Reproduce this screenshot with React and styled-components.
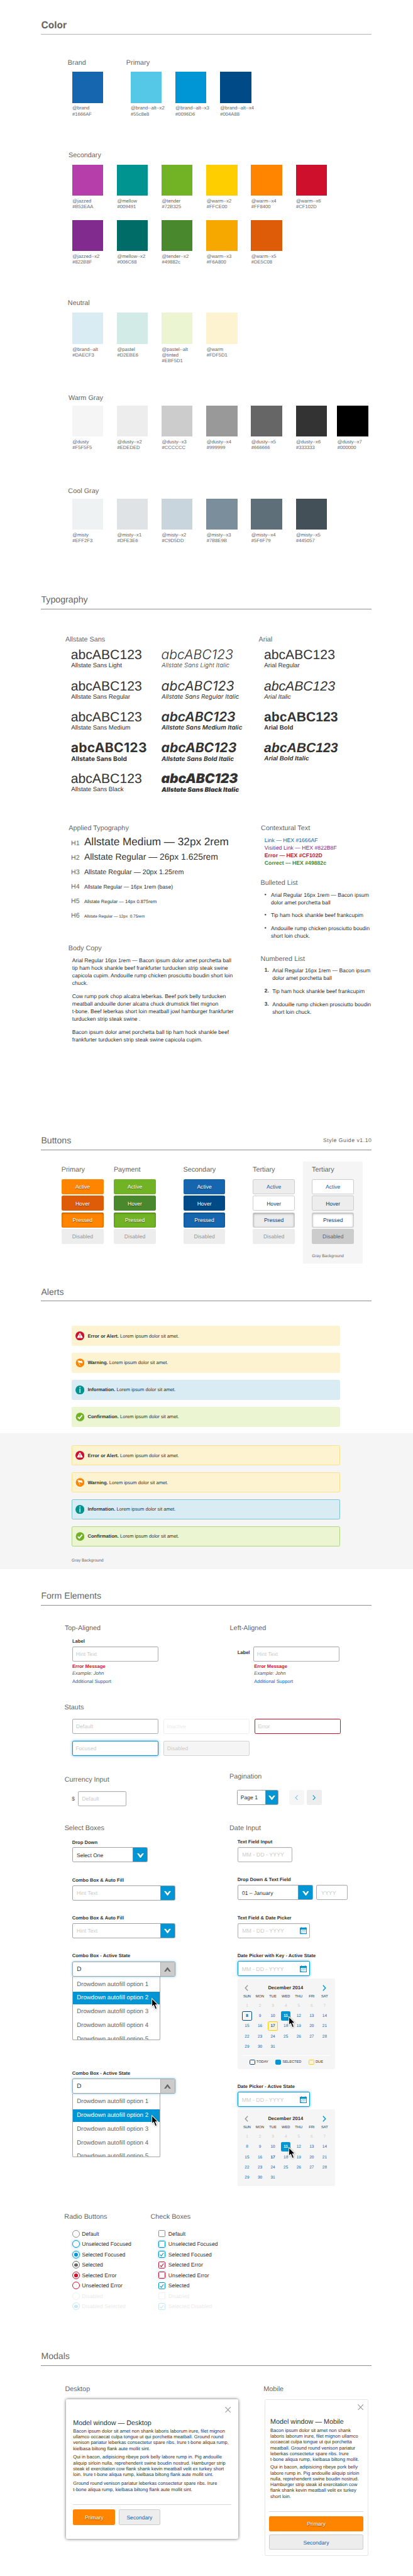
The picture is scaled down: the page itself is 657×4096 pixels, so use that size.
import React from "react";
import styled, { createGlobalStyle, css } from "styled-components";

/* One design unit is a tenth of a rem; the root size sets the scale of the sheet. */
const u = (n) => `${n / 10}rem`;

const GlobalStyle = createGlobalStyle`
  html { font-size: 5.473px; }
  body {
    margin: 0;
    background: #fff;
    color: #333;
    font-family: "Liberation Sans", Arial, Helvetica, sans-serif;
    font-size: ${u(15.8)};
    text-rendering: geometricPrecision;
  }
  *, *::before, *::after { box-sizing: border-box; }
  p, h1, h2, h3, ul, ol { margin: 0; padding: 0; font-weight: 400; list-style: none; }
`;

/* ---------- page frame ---------- */

const Page = styled.main`
  width: ${u(1200)};
  height: ${u(7484)};
  padding-top: ${u(58)};
  overflow: hidden;
`;

const Section = styled.section`
  height: ${(p) => u(p.$height)};
`;

const SectionHeader = styled.header`
  display: flex;
  justify-content: space-between;
  align-items: flex-end;
  width: ${u(960)};
  height: ${u(42)};
  margin-left: ${u(119.5)};
  padding-bottom: ${(p) => u(p.$pad ?? 10.5)};
  border-bottom: 1px solid ${(p) => p.$rule ?? "#8f8f8f"};
`;

const SectionTitle = styled.h1`
  font-size: ${(p) => u(p.$size ?? 25.8)};
  line-height: ${u(30)};
  color: #666;
  white-space: nowrap;
  ${(p) =>
    p.$strong &&
    css`
      font-family: Inter, "Open Sans", sans-serif;
      font-weight: 700;
    `}
`;

const Version = styled.span`
  font-size: ${u(15.8)};
  line-height: ${u(29)};
  letter-spacing: ${u(1)};
  margin-right: ${u(-1)};
  color: #666;
`;

const Label = styled.h2`
  margin-left: ${(p) => u(p.$x ?? 0)};
  font-size: ${u(19.8)};
  line-height: ${u(24)};
  color: #666;
  white-space: nowrap;
`;

const Split = styled.div`
  display: grid;
  grid-template-columns: ${(p) => p.$cols.map(u).join(" ")};
  align-items: start;
  margin-top: ${(p) => u(p.$top ?? 0)};
  margin-left: ${(p) => u(p.$x ?? 0)};
  height: ${(p) => (p.$height ? u(p.$height) : "auto")};
`;

const Column = styled.div`
  display: flex;
  flex-direction: column;
  padding-top: ${(p) => u(p.$top ?? 0)};
`;

/* ---------- colour ---------- */

const PaletteGroup = styled.div`
  height: ${(p) => u(p.$height)};
`;

const SwatchGrid = styled.div`
  display: grid;
  grid-template-columns: ${(p) => (p.$tail ? `repeat(6, ${u(130)}) ${u(90)}` : `repeat(7, ${u(130)})`)};
  grid-auto-rows: ${u(160)};
  margin-top: ${(p) => u(p.$gap)};
  margin-left: ${(p) => u(p.$x ?? 210)};
`;

const SwatchItem = styled.div`
  width: ${u(90)};
  margin-left: ${(p) => (p.$last ? u(-10) : 0)};
`;

const Chip = styled.div`
  height: ${u(90)};
  background: ${(p) => p.$color};
`;

const ChipText = styled.p`
  padding: ${u(7)} 0 0 ${(p) => u(p.$inset ?? 0)};
  font-size: ${u(14)};
  line-height: ${u(16.8)};
  color: #666;
  white-space: pre;
`;

function Swatches({ items, gap, x, tail, inset }) {
  return (
    <SwatchGrid $gap={gap} $x={x} $tail={tail}>
      {items.map(([color, name], i) => (
        <SwatchItem key={name} $last={tail && i === 6}>
          <Chip $color={color} />
          <ChipText $inset={inset}>{name}</ChipText>
        </SwatchItem>
      ))}
    </SwatchGrid>
  );
}

const primary = [
  ["#55c8e8", "@brand--alt--x2\n#55c8e8"],
  ["#0096d6", "@brand--alt--x3\n#0096D6"],
  ["#004a88", "@brand--alt--x4\n#004A88"],
];
const secondaryTop = [
  ["#b53eaa", "@jazzed\n#B53EAA"],
  ["#009491", "@mellow\n#009491"],
  ["#72b325", "@tender\n#72B325"],
  ["#ffce00", "@warm--x2\n#FFCE00"],
  ["#ff8400", "@warm--x4\n#FF8400"],
  ["#cf102d", "@warm--x6\n#CF102D"],
];
const secondaryBottom = [
  ["#822b8f", "@jazzed--x2\n#822B8F"],
  ["#006c68", "@mellow--x2\n#006C68"],
  ["#49882c", "@tender--x2\n#49882c"],
  ["#f6a800", "@warm--x3\n#F6A800"],
  ["#de5c08", "@warm--x5\n#DE5C08"],
];
const neutral = [
  ["#daecf3", "@brand--alt\n#DAECF3"],
  ["#d2ebe6", "@pastel\n#D2EBE6"],
  ["#ebf5d1", "@pastel--alt\n@tinted\n#EBF5D1"],
  ["#fdf3d1", "@warm\n#FDF5D1"],
];
const warmGray = [
  ["#f5f5f5", "@dusty\n#F5F5F5"],
  ["#ededed", "@dusty--x2\n#EDEDED"],
  ["#cccccc", "@dusty--x3\n#CCCCCC"],
  ["#999999", "@dusty--x4\n#999999"],
  ["#666666", "@dusty--x5\n#666666"],
  ["#333333", "@dusty--x6\n#333333"],
  ["#000000", "@dusty--x7\n#000000"],
];
const coolGray = [
  ["#eff2f3", "@misty\n#EFF2F3"],
  ["#dfe3e6", "@misty--x1\n#DFE3E6"],
  ["#c9d5dd", "@misty--x2\n#C9D5DD"],
  ["#7b8e9b", "@misty--x3\n#7B8E9B"],
  ["#5f6f79", "@misty--x4\n#5F6F79"],
  ["#445057", "@misty--x5\n#445057"],
];

/* ---------- typography ---------- */

const SpecimenGrid = styled.div`
  display: grid;
  grid-template-columns: ${u(262.8)} ${u(298.5)} ${u(260)};
  grid-auto-rows: ${u(90)};
  margin: ${u(12.5)} 0 0 ${u(206)};
`;

const Specimen = styled.div`
  font-family: ${(p) => (p.$face === "inter" ? "Inter, sans-serif" : "inherit")};
  font-weight: ${(p) => p.$weight};
  font-style: ${(p) => (p.$italic ? "italic" : "normal")};
  color: #333;
  white-space: nowrap;
`;

const SpecimenSample = styled.div`
  font-size: ${(p) => u(p.$size ?? 38.7)};
  line-height: ${u(40)};
  letter-spacing: ${(p) => u(p.$track ?? 0)};
`;

const SpecimenName = styled.div`
  padding-left: ${u(0.8)};
  font-size: ${(p) => u(p.$size ?? 17.85)};
  line-height: ${u(22)};
`;

const specimens = [
  { name: "Allstate Sans Light", weight: 400 },
  { name: "Allstate Sans Light Italic", weight: 300, italic: true, face: "inter", track: 0.1 },
  { name: "Arial Regular", weight: 400 },
  { name: "Allstate Sans Regular", weight: 400 },
  { name: "Allstate Sans Regular Italic", weight: 400, italic: true, face: "inter", track: 0.1 },
  { name: "Arial Italic", weight: 400, italic: true },
  { name: "Allstate Sans Medium", weight: 400 },
  { name: "Allstate Sans Medium Italic", weight: 600, italic: true, face: "inter", track: -0.1 },
  { name: "Arial Bold", weight: 700 },
  { name: "Allstate Sans Bold", weight: 700, face: "inter", track: 0.5, nameSize: 18.4 },
  { name: "Allstate Sans Bold Italic", weight: 700, italic: true, face: "inter", nameSize: 18.2 },
  { name: "Arial Bold Italic", weight: 700, italic: true },
  { name: "Allstate Sans Black", weight: 400 },
  { name: "Allstate Sans Black Italic", weight: 900, italic: true, face: "inter", track: -0.35, nameSize: 18 },
];

const HeadingRow = styled.div`
  display: flex;
  align-items: baseline;
  height: ${u(42)};
  margin-left: ${u(7)};
  white-space: nowrap;
`;

const HeadingTag = styled.span`
  width: ${u(38)};
  font-size: ${u(19.4)};
  line-height: ${u(42)};
  color: #666;
`;

const HeadingSample = styled.span`
  font-size: ${(p) => u(p.$size)};
  line-height: 1;
  color: #333;
  white-space: pre;
`;

const headings = [
  ["H1", 31.4, "Allstate Medium — 32px 2rem"],
  ["H2", 25.5, "Allstate Regular — 26px 1.625rem"],
  ["H3", 19.7, "Allstate Regular — 20px 1.25rem"],
  ["H4", 15.7, "Allstate Regular — 16px 1rem (base)"],
  ["H5", 13.8, "Allstate Regular — 14px 0.875rem"],
  ["H6", 11.75, "Allstate Regular — 12px  0.75rem"],
];

const Copy = styled.p`
  font-size: ${(p) => u(p.$size ?? 15.75)};
  line-height: ${(p) => u(p.$line ?? 22)};
  color: #333;
  white-space: pre;
`;

const BodyCopy = styled.div`
  display: flex;
  flex-direction: column;
  gap: ${u(16)};
  margin: ${u(9.7)} 0 0 ${u(10)};
`;

const ContextList = styled.div`
  margin: ${u(10)} 0 0 ${u(10.5)};
`;

const ContextLine = styled.p`
  font-size: ${u(15.85)};
  line-height: ${u(22)};
  font-weight: ${(p) => (p.$bold ? 700 : 400)};
  color: ${(p) => p.$color};
`;

const ItemList = styled.ul`
  display: flex;
  flex-direction: column;
  gap: ${u(16)};
  margin: ${u(9.8)} 0 0 ${u(10.5)};
`;

const Item = styled.li`
  display: grid;
  grid-template-columns: ${(p) => u(p.$indent)} auto;
`;

const Marker = styled.span`
  font-weight: 700;
  font-size: ${u(15)};
  line-height: ${u(22)};
`;

const Spacer = styled.div`
  height: ${(p) => u(p.$h)};
`;

/* ---------- buttons ---------- */

const looks = {
  orange: ["#ff8400", "#fff"],
  orangeHover: ["#de5c08", "#fff"],
  green: ["#72b325", "#fff"],
  greenHover: ["#49882c", "#fff"],
  blue: ["#1666af", "#fff"],
  blueHover: ["#004a88", "#fff"],
  light: ["#ededed", "#1666af", "#ccc"],
  lightHover: ["#ededed", "#004a88", "#ccc"],
  white: ["#fff", "#1666af", "#ccc"],
  whiteHover: ["#fff", "#004a88", "#ccc"],
  disabled: ["#ededed", "#999"],
  disabledDark: ["#ccc", "#666"],
};

const Button = styled.div`
  display: flex;
  align-items: center;
  justify-content: center;
  width: ${(p) => (p.$wide ? "100%" : u(122))};
  height: ${u(44)};
  padding-top: ${u(1.5)};
  border: ${(p) => (looks[p.$look][2] ? `1px solid ${looks[p.$look][2]}` : "0")};
  border-radius: ${u(4)};
  background: ${(p) => looks[p.$look][0]};
  color: ${(p) => looks[p.$look][1]};
  font-size: ${u(15.7)};
  text-shadow: ${(p) => (looks[p.$look][1] === "#fff" ? "0 0.1rem 0.2rem rgba(0,0,0,.5)" : "none")};
  box-shadow: ${(p) => (p.$pressed ? "inset 0 0.2rem 0.6rem rgba(0,0,0,.35)" : "none")};
`;

const ButtonBoard = styled.div`
  display: flex;
  margin: ${u(33)} 0 0 ${u(179)};
`;

const ButtonColumn = styled.div`
  width: ${(p) => u(p.$width)};
  height: ${u(297)};
  padding: ${u(12.8)} 0 0 ${(p) => u(p.$inset ?? 0)};
  background: ${(p) => (p.$shaded ? "#f5f5f5" : "transparent")};
`;

const ButtonStack = styled.div`
  display: flex;
  flex-direction: column;
  gap: ${u(4)};
  margin-top: ${u(15.2)};
`;

const Note = styled.p`
  margin: ${(p) => u(p.$top)} 0 0 ${(p) => u(p.$x ?? 0)};
  font-size: ${u(11.9)};
  line-height: ${u(16)};
  color: #666;
`;

function ButtonSet({ title, width, variants, inset, shaded, note }) {
  return (
    <ButtonColumn $width={width} $inset={inset} $shaded={shaded}>
      <Label $x={-0.5}>{title}</Label>
      <ButtonStack>
        <Button $look={variants[0]}>Active</Button>
        <Button $look={variants[1]}>Hover</Button>
        <Button $look={variants[2]} $pressed>Pressed</Button>
        <Button $look={variants[3]}>Disabled</Button>
      </ButtonStack>
      {note && <Note $top={29.5}>{note}</Note>}
    </ButtonColumn>
  );
}

/* ---------- alerts ---------- */

const AlertList = styled.div`
  display: flex;
  flex-direction: column;
  gap: ${u(20.3)};
  width: ${u(779)};
  margin-left: ${u(209)};
`;

const AlertBox = styled.div`
  display: flex;
  align-items: center;
  gap: ${u(9.5)};
  height: ${u(58)};
  padding-left: ${u(10.4)};
  border: 1px solid ${(p) => p.$edge};
  border-radius: ${u(4)};
  background: ${(p) => p.$fill};
  font-size: ${u(13.9)};
  color: #333;
`;

const AlertIcon = styled.svg`
  display: block;
  width: ${u(26)};
  height: ${u(26)};
  margin-left: -1px;
`;

const GrayBand = styled.div`
  height: ${u(395)};
  margin-top: ${u(18.5)};
  padding-top: ${u(36)};
  background: #f5f5f5;
`;

const alertKinds = [
  {
    title: "Error or Alert.", fill: "#fdf3d1", edge: "#fbe38c",
    icon: (
      <>
        <circle cx="13" cy="13" r="13" fill="#cf102d" />
        <path d="M13 6.2 L19.6 17.6 H6.4 Z" fill="#fff" stroke="#fff" strokeWidth="3" strokeLinejoin="round" />
        <path d="M12 8.6 h2.2 l-.4 5.6 h-1.4 z M12 15.4 h2.2 v2 h-2.2 z" fill="#cf102d" />
      </>
    ),
  },
  {
    title: "Warning.", fill: "#fdf3d1", edge: "#fbe38c",
    icon: (
      <>
        <circle cx="13.5" cy="13" r="12.5" fill="#ff8400" />
        <path d="M6.6 6.6 L13.2 20.2" stroke="#fff" strokeWidth="1.5" strokeLinecap="round" />
        <path d="M7.4 6.6 C10.5 3.8 12.6 9.2 18 6.6 L21.3 12.6 C17 15.6 14.4 10.8 10.6 13.8 Z" fill="#fff" />
      </>
    ),
  },
  {
    title: "Information.", fill: "#daecf3", edge: "#7cc6cf",
    icon: (
      <>
        <circle cx="13" cy="13" r="13" fill="#009491" />
        <circle cx="13.2" cy="6" r="1.9" fill="#daecf3" />
        <path d="M11.7 9.6 h3 v12 h-3 z" fill="#daecf3" />
      </>
    ),
  },
  {
    title: "Confirmation.", fill: "#ebf5d1", edge: "#afd681",
    icon: (
      <>
        <circle cx="13.5" cy="13" r="12.5" fill="#72b325" />
        <path d="M7.2 13.6 L11.4 17.6 L19.4 8" fill="none" stroke="#fff" strokeWidth="3.4" />
      </>
    ),
  },
];

function Alerts({ outlined }) {
  return (
    <AlertList>
      {alertKinds.map((a) => (
        <AlertBox key={a.title} $fill={a.fill} $edge={outlined ? a.edge : a.fill}>
          <AlertIcon viewBox="0 0 26 26">{a.icon}</AlertIcon>
          <span><b>{a.title}</b> Lorem ipsum dolor sit amet.</span>
        </AlertBox>
      ))}
    </AlertList>
  );
}

/* ---------- form elements ---------- */

const fieldStates = {
  normal: css`border: 1px solid #adadad; box-shadow: inset 0 0.1rem 0.2rem rgba(0,0,0,.12);`,
  inactive: css`border: 1px solid #efefef; color: #ececec;`,
  error: css`border: ${u(2)} solid #cf102d;`,
  focused: css`border: ${u(2)} solid #0096d6; box-shadow: 0 0 0.8rem rgba(0,150,214,.6);`,
  disabled: css`border: 1px solid #d4d4d4; background: #f5f5f5;`,
};

const Field = styled.div`
  display: flex;
  align-items: center;
  justify-content: space-between;
  flex: none;
  width: ${(p) => u(p.$width)};
  height: ${u(44)};
  padding: ${u(1)} ${u(6)} 0 ${(p) => u(p.$pad ?? 9)};
  border-radius: ${u(4)};
  background: #fff;
  color: #ccc;
  font-size: ${(p) => u(p.$date ? 16.2 : 15.7)};
  white-space: nowrap;
  ${(p) => fieldStates[p.$state ?? "normal"]}
`;

const FieldLabel = styled.div`
  font-size: ${u(13.9)};
  font-weight: 700;
  line-height: ${u(18)};
  color: #333;
  white-space: nowrap;
  padding-bottom: ${(p) => u(p.$gap ?? 5.5)};
`;

const FieldNote = styled.div`
  font-size: ${u(13.9)};
  line-height: ${u(20)};
  margin-left: ${(p) => u(p.$x ?? 0)};
  margin-top: ${(p) => u(p.$top ?? 0)};
  color: ${(p) => p.$color};
  font-weight: ${(p) => (p.$bold ? 700 : 400)};
  font-style: ${(p) => (p.$italic ? "italic" : "normal")};
`;

const FieldBlock = styled.div`
  height: ${(p) => u(p.$height ?? 110.2)};
`;

const Inline = styled.div`
  display: flex;
  align-items: center;
  margin-top: ${(p) => u(p.$top ?? 0)};
  margin-left: ${(p) => u(p.$x ?? 0)};
  gap: ${(p) => u(p.$gap ?? 0)};
`;

const StatusGrid = styled.div`
  display: grid;
  grid-template-columns: repeat(3, ${u(250)});
  gap: ${u(21)} ${u(15)};
  margin: ${u(19)} 0 0 ${u(210)};
`;

const Dollar = styled.span`
  width: ${u(18.5)};
  font-size: ${u(15.8)};
  color: #555;
`;

const SelectBox = styled.div`
  display: flex;
  flex: none;
  width: ${(p) => u(p.$width)};
  height: ${u(44)};
  border: 1px solid #a2a2a2;
  border-radius: ${u(4)};
  background: #fff;
  overflow: hidden;
  box-shadow: ${(p) => (p.$active ? "0 0 0.7rem rgba(0,150,214,.55)" : "none")};
`;

const SelectValue = styled.div`
  display: flex;
  align-items: center;
  flex: 1;
  padding: ${u(1)} 0 0 ${(p) => u(p.$pad ?? 11.5)};
  font-size: ${(p) => u(p.$size ?? 15.7)};
  color: ${(p) => (p.$hint ? "#ccc" : "#333")};
  white-space: nowrap;
`;

const SelectHandle = styled.div`
  display: flex;
  align-items: center;
  justify-content: center;
  width: ${(p) => u(p.$width ?? 42)};
  padding-top: ${u(3)};
  border-left: 1px solid ${(p) => (p.$open ? "#b0b0b0" : "#4f9fc4")};
  background: ${(p) => (p.$open ? "#ccc" : "#0096d6")};
  color: ${(p) => (p.$open ? "#666" : "#fff")};
  svg { width: ${u(20)}; height: ${u(13)}; transform: ${(p) => (p.$open ? "rotate(180deg)" : "none")}; }
`;

function Select({ width, value, hint, open, handle, pad, size }) {
  return (
    <SelectBox $width={width} $active={open}>
      <SelectValue $hint={hint} $pad={pad} $size={size}>{value}</SelectValue>
      <SelectHandle $open={open} $width={handle}>
        <svg viewBox="0 0 20 13"><path d="M0 0 H5.2 L10 6.6 L14.8 0 H20 L10.9 12.6 H9.1 Z" fill="currentColor" /></svg>
      </SelectHandle>
    </SelectBox>
  );
}

const PagerButton = styled.div`
  display: flex;
  align-items: center;
  justify-content: center;
  width: ${u(44)};
  height: ${u(44)};
  border-radius: ${u(4)};
  background: ${(p) => (p.$off ? "#f6f6f6" : "#ededed")};
  svg { width: ${u(10)}; height: ${u(16)}; opacity: ${(p) => (p.$off ? 0.5 : 1)}; }
`;

function Arrow({ left, color, width = 2 }) {
  return (
    <svg viewBox="0 0 10 16">
      <path d={left ? "M8.6 1 L2 8 L8.6 15" : "M1.4 1 L8 8 L1.4 15"} fill="none" stroke={color} strokeWidth={width} />
    </svg>
  );
}

/* Pointer sits over the open list or calendar. */
const Pointer = styled.svg`
  position: absolute;
  left: ${(p) => u(p.$x)};
  top: ${(p) => u(p.$y)};
  width: ${u(22)};
  height: ${u(36)};
  overflow: visible;
  filter: drop-shadow(0 0.1rem 0.2rem rgba(0, 0, 0, 0.4));
`;

function Cursor({ x, y }) {
  return (
    <Pointer viewBox="0 0 22 36" $x={x} $y={y}>
      <path d="M1 1 V26 L6.4 21 L11 32.5 L16 30.5 L11.6 19.6 H19 Z" fill="#000" stroke="#fff" strokeWidth="2" />
    </Pointer>
  );
}

const Overlay = styled.div`
  position: relative;
  width: ${(p) => u(p.$width)};
`;

const OptionList = styled.div`
  display: flex;
  flex-direction: column;
  gap: ${u(4)};
  width: ${u(257)};
  height: ${u(184)};
  padding-top: ${u(5)};
  border: 1px solid #a8a8a8;
  border-top: 0;
  border-radius: 0 0 ${u(4)} ${u(4)};
  overflow: hidden;
`;

const Option = styled.div`
  flex: none;
  height: ${u(36)};
  padding-left: ${u(12)};
  font-size: ${u(17.75)};
  line-height: ${u(36)};
  white-space: nowrap;
  color: ${(p) => (p.$on ? "#fff" : "#666")};
  background: ${(p) => (p.$on ? "#0096d6" : "transparent")};
`;

function Combo() {
  return (
    <Overlay $width={300}>
      <Select width={300} value="D" open pad={12} size={18} />
      <OptionList>
        {[1, 2, 3, 4, 5].map((n) => (
          <Option key={n} $on={n === 2}>{`Drowdown autofill option ${n}`}</Option>
        ))}
      </OptionList>
      <Cursor x={230.5} y={105.5} />
    </Overlay>
  );
}

const CalendarGlyph = styled.svg`
  width: ${u(21)};
  height: ${u(21)};
`;

function CalendarIcon() {
  const dots = [];
  for (let row = 0; row < 4; row++)
    for (let col = 0; col < 5; col++) {
      if ((row === 0 && col === 0) || (row === 3 && col > 1)) continue;
      dots.push(<rect key={`${row}${col}`} x={4 + col * 2.8} y={9 + row * 2.5} width="1.3" height="1.3" fill="#0096d6" />);
    }
  return (
    <CalendarGlyph viewBox="0 0 21 21">
      <path d="M1.5 2 H4 V0.8 Q5 -0.4 6 0.8 V2 H15 V0.8 Q16 -0.4 17 0.8 V2 H19.5 Q21 2 21 3.5 V19 Q21 20.6 19.5 20.6 H1.5 Q0 20.6 0 19 V3.5 Q0 2 1.5 2 Z" fill="#0096d6" />
      <rect x="2.6" y="7.8" width="15.8" height="10.6" rx=".8" fill="#fff" />
      {dots}
    </CalendarGlyph>
  );
}

const CalendarPanel = styled.div`
  width: ${u(283)};
  height: ${(p) => u(p.$height)};
  margin-top: ${u(6)};
  padding-top: ${u(18)};
  border-radius: ${u(4)};
  background: #f5f5f5;
`;

const CalendarHead = styled.div`
  display: flex;
  align-items: center;
  justify-content: space-between;
  height: ${u(19)};
  padding: 0 ${u(24)} 0 ${u(21)};
  font-size: ${u(13.9)};
  font-weight: 700;
  svg { width: ${u(11)}; height: ${u(18)}; }
`;

const DayGrid = styled.div`
  display: grid;
  grid-template-columns: repeat(7, ${u(37.6)});
  grid-template-rows: ${u(14)};
  grid-auto-rows: ${u(28)};
  row-gap: ${u(2)};
  justify-items: center;
  margin: ${u(12)} 0 0 ${u(9.2)};
`;

const Weekday = styled.span`
  font-size: ${u(10.5)};
  line-height: ${u(14)};
  color: #333;
`;

const dayLooks = {
  past: css`color: #ccc;`,
  plain: css`color: #1666af;`,
  bold: css`color: #1666af; font-weight: 700;`,
  today: css`color: #004a88; font-weight: 700; border: ${u(2)} solid #004a88;`,
  selected: css`color: #fff; font-weight: 700; background: #0096d6;`,
  due: css`color: #1666af; font-weight: 700; border: ${u(2)} solid #ffce00; background: #fdf3d1;`,
};

const Day = styled.span`
  display: flex;
  align-items: center;
  justify-content: center;
  width: ${u(28)};
  height: ${u(28)};
  padding-top: ${u(1.4)};
  border-radius: ${u(4)};
  font-size: ${u(11.8)};
  ${(p) => dayLooks[p.$look]}
`;

const Legend = styled.div`
  display: flex;
  gap: ${u(21)};
  margin: ${u(11)} ${u(13)} 0 ${u(14)};
  padding: ${u(10)} 0 0 ${u(21)};
  border-top: 1px solid #fff;
`;

const LegendItem = styled.div`
  display: flex;
  align-items: center;
  gap: ${u(4.2)};
  font-size: ${u(10.4)};
  color: #333;
`;

const LegendKey = styled.span`
  width: ${u(16)};
  height: ${u(16)};
  border: ${u(2)} solid ${(p) => p.$edge};
  border-radius: ${u(3)};
  background: ${(p) => p.$fill};
`;

function Calendar({ legend }) {
  const look = (d) => {
    if (d < 8) return "past";
    if (d === 11) return "selected";
    if (d === 8) return legend ? "today" : "plain";
    if (d === 17) return legend ? "due" : "bold";
    return "plain";
  };
  return (
    <Overlay $width={283}>
      <CalendarPanel $height={legend ? 264 : 224}>
        <CalendarHead>
          <Arrow left color="#999" width={2.4} />
          December 2014
          <Arrow color="#0096d6" width={2.4} />
        </CalendarHead>
        <DayGrid>
          {["SUN", "MON", "TUE", "WED", "THU", "FRI", "SAT"].map((d) => <Weekday key={d}>{d}</Weekday>)}
          {Array.from({ length: 31 }, (_, i) => i + 1).map((d) => <Day key={d} $look={look(d)}>{d}</Day>)}
        </DayGrid>
        {legend && (
          <Legend>
            <LegendItem><LegendKey $edge="#004a88" $fill="transparent" />TODAY</LegendItem>
            <LegendItem><LegendKey $edge="#0096d6" $fill="#0096d6" />SELECTED</LegendItem>
            <LegendItem><LegendKey $edge="#ffce00" $fill="#fdf3d1" />DUE</LegendItem>
          </Legend>
        )}
      </CalendarPanel>
      <Cursor x={149.5} y={111} />
    </Overlay>
  );
}

const ChoiceList = styled.div`
  display: flex;
  flex-direction: column;
  margin: ${u(20.5)} 0 0 ${u(22)};
`;

const Choice = styled.div`
  display: flex;
  align-items: center;
  gap: ${(p) => u(p.$gap)};
  height: ${u(30.15)};
  font-size: ${u(15.8)};
  color: ${(p) => (p.$faded ? "#ececec" : "#333")};
  white-space: nowrap;
`;

const RadioDot = styled.span`
  display: flex;
  align-items: center;
  justify-content: center;
  width: ${u(22)};
  height: ${u(22)};
  border: ${(p) => (p.$thin ? "1px" : u(2))} solid ${(p) => p.$color};
  border-radius: 50%;
  opacity: ${(p) => (p.$faded ? 0.22 : 1)};
  box-shadow: ${(p) => (p.$glow ? "0 0 0.6rem rgba(0,150,214,.6)" : "none")};
  &::after {
    content: "";
    width: ${u(10.5)};
    height: ${u(10.5)};
    border-radius: 50%;
    background: ${(p) => (p.$on ? p.$color : "transparent")};
  }
`;

const CheckSquare = styled.span`
  display: flex;
  width: ${u(20)};
  height: ${u(20)};
  border: ${(p) => (p.$thin ? "1px" : u(2))} solid ${(p) => p.$color};
  border-radius: ${u(3)};
  opacity: ${(p) => (p.$faded ? 0.22 : 1)};
  box-shadow: ${(p) => (p.$glow ? "0 0 0.6rem rgba(0,150,214,.6)" : "none")};
`;

const radios = [
  ["Default", { $color: "#8c8c8c", $thin: true }],
  ["Unselected Focused", { $color: "#0096d6", $glow: true }],
  ["Selected Focused", { $color: "#0096d6", $glow: true, $on: true }],
  ["Selected", { $color: "#666", $on: true }],
  ["Selected Error", { $color: "#cf102d", $on: true }],
  ["Unselected Error", { $color: "#cf102d" }],
  ["Disabled", { $color: "#bbb", $thin: true, $faded: true }],
  ["Disabled Selected", { $color: "#0096d6", $on: true, $faded: true }],
];
const checks = [
  ["Default", { $color: "#8c8c8c", $thin: true }],
  ["Unselected Focused", { $color: "#0096d6", $glow: true }],
  ["Selected Focused", { $color: "#0096d6", $glow: true, $on: true }],
  ["Selected Error", { $color: "#cf102d", $on: true }],
  ["Unselected Error", { $color: "#cf102d", $glow: true }],
  ["Selected", { $color: "#0096d6", $on: true }],
  ["Disabled", { $color: "#bbb", $thin: true, $faded: true }],
  ["Selected Disabled", { $color: "#0096d6", $on: true, $faded: true }],
];

/* ---------- modals ---------- */

const Modal = styled.div`
  width: ${(p) => u(p.$mobile ? 302 : 501)};
  height: ${(p) => u(p.$mobile ? 454 : 405.5)};
  margin: ${u(16)} 0 0 ${u(1.5)};
  padding: 0 ${(p) => u(p.$mobile ? 12 : 19.5)} 0 ${(p) => u(p.$mobile ? 11 : 21)};
  border-radius: ${u(4)};
  background: #fff;
  ${(p) =>
    p.$mobile
      ? css`border: 1px solid #e6e6e6;`
      : css`box-shadow: 0 0 0.9rem rgba(0, 0, 0, 0.6);`}
`;

const ModalTop = styled.div`
  display: flex;
  justify-content: flex-end;
  height: ${(p) => u(p.$mobile ? 53 : 57.5)};
  padding-top: ${(p) => u(p.$mobile ? 12 : 21)};
  svg { width: ${u(17)}; height: ${u(17)}; margin-right: ${(p) => u(p.$mobile ? 0 : 2)}; }
`;

const ModalBody = styled.div`
  padding-left: ${(p) => u(p.$mobile ? 4.5 : 0)};
  height: ${(p) => u(p.$mobile ? 271 : 248)};
`;

const ModalTitle = styled.h3`
  font-size: ${u(19.7)};
  line-height: ${u(24)};
  color: #333;
  white-space: nowrap;
`;

const ModalCopy = styled.div`
  display: flex;
  flex-direction: column;
  gap: ${(p) => u(p.$mobile ? 5.9 : 8.4)};
  margin-top: ${(p) => u(p.$mobile ? 3 : 1.6)};
`;

const ModalActions = styled.div`
  display: flex;
  flex-direction: ${(p) => (p.$mobile ? "column" : "row")};
  gap: ${u(10)};
  padding-top: ${(p) => u(p.$mobile ? 11.5 : 13)};
  border-top: 1px solid #d8d8d8;
`;

function CloseIcon() {
  return (
    <svg viewBox="0 0 17 17"><path d="M.8 .5 L16.2 16.5 M16.2 .5 L.8 16.5" stroke="#999" strokeWidth="2" /></svg>
  );
}

const desktopCopy = [
  "Bacon ipsum dolor sit amet non shank laboris laborum irure, filet mignon\nullamco occaecat culpa tongue ut qui porchetta meatball. Ground round\nvenison pariatur leberkas consectetur spare ribs. Irure t-bone aliqua rump,\nkielbasa biltong flank aute mollit sint.",
  "Qui in bacon, adipisicing ribeye pork belly labore rump in. Pig andouille\naliquip sirloin nulla, reprehenderit swine boudin nostrud. Hamburger strip\nsteak id exercitation cow flank shank kevin meatball velit ex turkey short\nloin. Irure t-bone aliqua rump, kielbasa biltong flank aute mollit sint.",
  "Ground round venison pariatur leberkas consectetur spare ribs. Irure\nt-bone aliqua rump, kielbasa biltong flank aute mollit sint.",
];
const mobileCopy = [
  "Bacon ipsum dolor sit amet non shank\nlaboris laborum irure, filet mignon ullamco\noccaecat culpa tongue ut qui porchetta\nmeatball. Ground round venison pariatur\nleberkas consectetur spare ribs. Irure\nt-bone aliqua rump, kielbasa biltong mollit.",
  "Qui in bacon, adipisicing ribeye pork belly\nlabore rump in. Pig andouille aliquip sirloin\nnulla, reprehenderit swine boudin nostrud.\nHamburger strip steak id exercitation cow\nflank shank kevin meatball velit ex turkey\nshort loin.",
];

/* ---------- sections ---------- */

function ColorSection() {
  return (
    <Section $height={1671}>
      <SectionHeader $pad={9.6} $rule="#b4b4b4"><SectionTitle $strong $size={28.2}>Color</SectionTitle></SectionHeader>
      <Split $cols={[380, 700]} $top={71} $height={268.7}>
        <PaletteGroup $height={268}>
          <Label $x={197}>Brand</Label>
          <Swatches gap={14} items={[["#1666af", "@brand\n#1666AF"]]} />
        </PaletteGroup>
        <PaletteGroup $height={268}>
          <Label $x={-13}>Primary</Label>
          <Swatches gap={14} x={0} items={primary} />
        </PaletteGroup>
      </Split>
      <PaletteGroup $height={430.3}>
        <Label $x={199.3}>Secondary</Label>
        <Swatches gap={15.3} items={secondaryTop} inset={0.6} />
        <Swatches gap={0} items={secondaryBottom} inset={0.6} />
      </PaletteGroup>
      <PaletteGroup $height={275.5}>
        <Label $x={197}>Neutral</Label>
        <Swatches gap={15} items={neutral} inset={0.6} />
      </PaletteGroup>
      <PaletteGroup $height={270}>
        <Label $x={199}>Warm Gray</Label>
        <Swatches gap={9.5} items={warmGray} tail inset={0.6} />
      </PaletteGroup>
      <PaletteGroup $height={150}>
        <Label $x={198}>Cool Gray</Label>
        <Swatches gap={9.5} items={coolGray} inset={0.6} />
      </PaletteGroup>
    </Section>
  );
}

function TypographySection() {
  return (
    <Section $height={1570}>
      <SectionHeader $pad={11.4}><SectionTitle $size={26}>Typography</SectionTitle></SectionHeader>
      <Split $x={190} $cols={[562, 300]} $top={77}>
        <Label>Allstate Sans</Label>
        <Label>Arial</Label>
      </Split>
      <SpecimenGrid>
        {specimens.map((s) => (
          <Specimen key={s.name} $face={s.face} $weight={s.weight} $italic={s.italic}>
            <SpecimenSample $size={s.face ? 38.6 : undefined} $track={s.track}>abcABC123</SpecimenSample>
            <SpecimenName $size={s.nameSize}>{s.name}</SpecimenName>
          </Specimen>
        ))}
      </SpecimenGrid>
      <Split $x={199.7} $cols={[558.8, 400]} $top={61.5}>
        <Column>
          <Label>Applied Typography</Label>
          <Spacer $h={9.6} />
          {headings.map(([tag, size, text]) => (
            <HeadingRow key={tag}>
              <HeadingTag>{tag}</HeadingTag>
              <HeadingSample $size={size}>{text}</HeadingSample>
            </HeadingRow>
          ))}
          <Spacer $h={63.4} />
          <Label $x={-1}>Body Copy</Label>
          <BodyCopy>
            <Copy>{"Arial Regular 16px 1rem — Bacon ipsum dolor amet porchetta ball\ntip ham hock shankle beef frankfurter turducken strip steak swine\ncapicola cupim. Andouille rump chicken prosciutto boudin short loin\nchuck."}</Copy>
            <Copy>{"Cow rump pork chop alcatra leberkas. Beef pork belly turducken\nmeatball andouille doner alcatra chuck drumstick filet mignon\nt-bone. Beef leberkas short loin meatball jowl hamburger frankfurter\nturducken strip steak swine ."}</Copy>
            <Copy>{"Bacon ipsum dolor amet porchetta ball tip ham hock shankle beef\nfrankfurter turducken strip steak swine capicola cupim."}</Copy>
          </BodyCopy>
        </Column>
        <Column>
          <Label>Contextural Text</Label>
          <ContextList>
            <ContextLine $color="#1666af">Link — HEX #1666AF</ContextLine>
            <ContextLine $color="#822b8f">Visitied Link — HEX #822B8F</ContextLine>
            <ContextLine $color="#cf102d" $bold>Error — HEX #CF102D</ContextLine>
            <ContextLine $color="#49882c" $bold>Correct — HEX #49882c</ContextLine>
          </ContextList>
          <Spacer $h={36.7} />
          <Label $x={-1}>Bulleted List</Label>
          <ItemList>
            <Item $indent={18.5}><Marker>•</Marker><Copy>{"Arial Regular 16px 1rem — Bacon ipsum\ndolor amet porchetta ball"}</Copy></Item>
            <Item $indent={18.5}><Marker>•</Marker><Copy>Tip ham hock shankle beef frankcupim</Copy></Item>
            <Item $indent={18.5}><Marker>•</Marker><Copy>{"Andouille rump chicken prosciutto boudin\nshort loin chuck."}</Copy></Item>
          </ItemList>
          <Spacer $h={44.3} />
          <Label $x={-1}>Numbered List</Label>
          <ItemList>
            <Item $indent={22.5}><Marker>1.</Marker><Copy>{"Arial Regular 16px 1rem — Bacon ipsum\ndolor amet porchetta ball"}</Copy></Item>
            <Item $indent={22.5}><Marker>2.</Marker><Copy>Tip ham hock shankle beef frankcupim</Copy></Item>
            <Item $indent={22.5}><Marker>3.</Marker><Copy>{"Andouille rump chicken prosciutto boudin\nshort loin chuck."}</Copy></Item>
          </ItemList>
        </Column>
      </Split>
    </Section>
  );
}

function ButtonsSection() {
  return (
    <Section $height={439}>
      <SectionHeader><SectionTitle>Buttons</SectionTitle><Version>Style Guide v1.10</Version></SectionHeader>
      <ButtonBoard>
        <ButtonSet title="Primary" width={152} variants={["orange", "orangeHover", "orange", "disabled"]} />
        <ButtonSet title="Payment" width={202} variants={["green", "greenHover", "green", "disabled"]} />
        <ButtonSet title="Secondary" width={202} variants={["blue", "blueHover", "blue", "disabled"]} />
        <ButtonSet title="Tertiary" width={145} variants={["light", "whiteHover", "lightHover", "disabled"]} />
        <ButtonSet title="Tertiary" width={174} inset={27} shaded note="Gray Background" variants={["white", "lightHover", "whiteHover", "disabledDark"]} />
      </ButtonBoard>
    </Section>
  );
}

function AlertsSection() {
  return (
    <Section $height={885}>
      <SectionHeader><SectionTitle>Alerts</SectionTitle></SectionHeader>
      <Spacer $h={72.2} />
      <Alerts />
      <GrayBand>
        <Alerts outlined />
        <Note $top={36} $x={208.5}>Gray Background</Note>
      </GrayBand>
    </Section>
  );
}

function FieldMessages({ x }) {
  return (
    <>
      <FieldNote $x={x} $color="#cf102d" $bold $top={5}>Error Message</FieldNote>
      <FieldNote $x={x} $color="#555" $italic>Example: John</FieldNote>
      <FieldNote $x={x} $color="#1666af" $top={3}>Additional Support</FieldNote>
    </>
  );
}

function FormSection() {
  return (
    <Section $height={2209}>
      <SectionHeader $pad={13}><SectionTitle>Form Elements</SectionTitle></SectionHeader>
      <Split $x={188} $cols={[480, 400]} $top={55.4} $height={229.6}>
        <Column>
          <Label>Top-Aligned</Label>
          <Split $x={22} $cols={[250]} $top={16}>
            <FieldLabel>Label</FieldLabel>
            <Field $width={250}>Hint Text</Field>
            <FieldMessages x={0} />
          </Split>
        </Column>
        <Column>
          <Label>Left-Aligned</Label>
          <Inline $x={22} $top={39.5}>
            <FieldLabel $gap={7}>Label</FieldLabel>
            <Inline $x={10}><Field $width={250}>Hint Text</Field></Inline>
          </Inline>
          <FieldMessages x={70.5} />
        </Column>
      </Split>
      <Label $x={187.5}>Stauts</Label>
      <StatusGrid>
        <Field $width={250}>Default</Field>
        <Field $width={250} $state="inactive">Inactive</Field>
        <Field $width={250} $state="error" $pad={8}>Error</Field>
        <Field $width={250} $state="focused" $pad={8}>Focused</Field>
        <Field $width={250} $state="disabled">Disabled</Field>
      </StatusGrid>
      <Split $x={188} $cols={[480, 400]} $top={49.5} $height={149}>
        <Column $top={8.6}>
          <Label $x={-0.5}>Currency Input</Label>
          <Inline $x={20.8} $top={19}>
            <Dollar>$</Dollar>
            <Field $width={140}>Default</Field>
          </Inline>
        </Column>
        <Column>
          <Label $x={-1}>Pagination</Label>
          <Inline $x={21} $top={24.6} $gap={7}>
            <Select width={120} value="Page 1" handle={36} pad={8.5} />
            <Inline $x={24} $gap={8}>
              <PagerButton $off><Arrow left color="#0096d6" /></PagerButton>
              <PagerButton><Arrow color="#0096d6" /></PagerButton>
            </Inline>
          </Inline>
        </Column>
      </Split>
      <Split $x={188} $cols={[480, 400]} $height={1130}>
        <Column>
          <Label $x={-0.5}>Select Boxes</Label>
          <Split $x={21.5} $cols={[320]} $top={19.2}>
            <FieldBlock><FieldLabel>Drop Down</FieldLabel><Select width={220} value="Select One" /></FieldBlock>
            <FieldBlock><FieldLabel>Combo Box &amp; Auto Fill</FieldLabel><Select width={300} value="Hint Text" hint /></FieldBlock>
            <FieldBlock><FieldLabel>Combo Box &amp; Auto Fill</FieldLabel><Select width={300} value="Hint Text" hint /></FieldBlock>
            <FieldBlock $height={340.5}><FieldLabel $gap={6.5}>Combo Box - Active State</FieldLabel><Combo /></FieldBlock>
            <FieldBlock><FieldLabel $gap={6.5}>Combo Box - Active State</FieldLabel><Combo /></FieldBlock>
          </Split>
        </Column>
        <Column>
          <Label $x={-1}>Date Input</Label>
          <Split $x={22} $cols={[330]} $top={18.5}>
            <FieldBlock><FieldLabel>Text Field Input</FieldLabel><Field $width={160} $pad={12} $date>MM - DD - YYYY</Field></FieldBlock>
            <FieldBlock>
              <FieldLabel>Drop Down &amp; Text Field</FieldLabel>
              <Inline $gap={10}><Select width={220} value="01 – January" /><Field $width={90} $pad={12} $date>YYYY</Field></Inline>
            </FieldBlock>
            <FieldBlock $height={110.8}>
              <FieldLabel $gap={6}>Text Field &amp; Date Picker</FieldLabel>
              <Field $width={210} $pad={12} $date>MM - DD - YYYY<CalendarIcon /></Field>
            </FieldBlock>
            <FieldBlock $height={380.2}>
              <FieldLabel>Date Picker with Key - Active State</FieldLabel>
              <Field $width={210} $pad={11} $date $state="focused">MM - DD - YYYY<CalendarIcon /></Field>
              <Calendar legend />
            </FieldBlock>
            <FieldBlock>
              <FieldLabel>Date Picker - Active State</FieldLabel>
              <Field $width={210} $pad={11} $date $state="focused">MM - DD - YYYY<CalendarIcon /></Field>
              <Calendar />
            </FieldBlock>
          </Split>
        </Column>
      </Split>
      <Split $x={188} $cols={[250, 400]}>
        <Column>
          <Label $x={-1}>Radio Buttons</Label>
          <ChoiceList>
            {radios.map(([text, look]) => (
              <Choice key={text} $gap={6} $faded={look.$faded}><RadioDot {...look} />{text}</Choice>
            ))}
          </ChoiceList>
        </Column>
        <Column>
          <Label $x={-0.5}>Check Boxes</Label>
          <ChoiceList>
            {checks.map(([text, look]) => (
              <Choice key={text} $gap={9.5} $faded={look.$faded}>
                <CheckSquare {...look}>
                  {look.$on && (
                    <svg viewBox="0 0 16 16"><path d="M3.4 9 L6.4 12.6 L12.8 4" fill="none" stroke={look.$color} strokeWidth="2" /></svg>
                  )}
                </CheckSquare>
                {text}
              </Choice>
            ))}
          </ChoiceList>
        </Column>
      </Split>
    </Section>
  );
}

function ModalsSection() {
  return (
    <Section $height={652}>
      <SectionHeader $pad={12}><SectionTitle>Modals</SectionTitle></SectionHeader>
      <Split $x={190} $cols={[577, 320]} $top={57}>
        <Column>
          <Label $x={-1}>Desktop</Label>
          <Modal>
            <ModalTop><CloseIcon /></ModalTop>
            <ModalBody>
              <ModalTitle>Model window — Desktop</ModalTitle>
              <ModalCopy>{desktopCopy.map((t) => <Copy key={t} $size={13.8} $line={17}>{t}</Copy>)}</ModalCopy>
            </ModalBody>
            <ModalActions>
              <Button $look="orange">Primary</Button>
              <Button $look="light">Secondary</Button>
            </ModalActions>
          </Modal>
        </Column>
        <Column>
          <Label $x={-1}>Mobile</Label>
          <Modal $mobile>
            <ModalTop $mobile><CloseIcon /></ModalTop>
            <ModalBody $mobile>
              <ModalTitle>Model window — Mobile</ModalTitle>
              <ModalCopy $mobile>{mobileCopy.map((t) => <Copy key={t} $size={13.8} $line={16.85}>{t}</Copy>)}</ModalCopy>
            </ModalBody>
            <ModalActions $mobile>
              <Button $look="orange" $wide>Primary</Button>
              <Button $look="light" $wide>Secondary</Button>
            </ModalActions>
          </Modal>
        </Column>
      </Split>
    </Section>
  );
}

export default function App() {
  return (
    <>
      <GlobalStyle />
      <Page>
        <ColorSection />
        <TypographySection />
        <ButtonsSection />
        <AlertsSection />
        <FormSection />
        <ModalsSection />
      </Page>
    </>
  );
}
